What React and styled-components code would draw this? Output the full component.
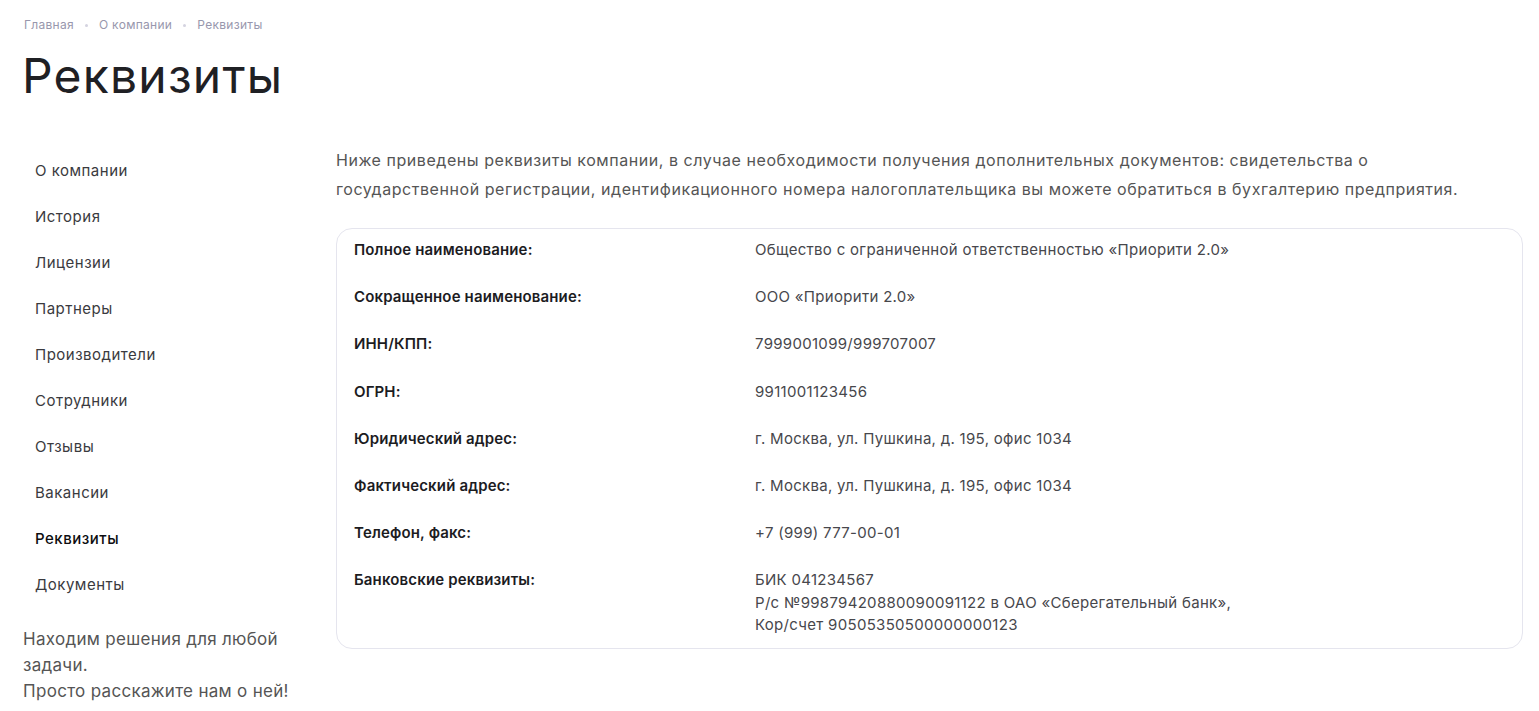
import React from 'react';
import styled, { createGlobalStyle } from 'styled-components';

const Global = createGlobalStyle`
  body {
    margin: 0;
    background: #fff;
    font-family: Inter, 'Noto Sans', sans-serif;
    color: #222;
  }
`;

const Page = styled.div`
  padding: 16px 16px 20px 24px;
`;

const Crumbs = styled.nav`
  display: flex;
  align-items: center;
  gap: 11px;
  font-size: 12px;
  letter-spacing: 0.3px;
  line-height: 18px;
  color: #9897ad;
`;

const Dot = styled.span`
  width: 3px;
  height: 3px;
  border-radius: 50%;
  background: #d4d3e0;
`;

const Title = styled.h1`
  margin: 12px 0 0 -2px;
  font-size: 48px;
  font-weight: 400;
  line-height: 60px;
  color: #1f2024;
  letter-spacing: 1.2px;
`;

const Layout = styled.div`
  display: grid;
  grid-template-columns: 290px 1fr;
  column-gap: 22px;
  margin-top: 40px;
`;

const Side = styled.aside`
  padding-top: 2px;
`;

const Menu = styled.ul`
  list-style: none;
  margin: 0;
  padding: 0;
`;

const MenuItem = styled.li`
  padding: 12px 11px;
  font-size: 15px;
  letter-spacing: 0.5px;
  line-height: 22px;
  color: ${p => (p.$active ? '#0d0d10' : '#3a3a3e')};
  font-weight: ${p => (p.$active ? 500 : 400)};
`;

const Tagline = styled.p`
  margin: 18px 0 0 -1px;
  font-size: 17px;
  letter-spacing: 0.3px;
  line-height: 26px;
  color: #555;
`;

const Intro = styled.p`
  margin: 0 0 24px;
  max-width: 1170px;
  font-size: 16px;
  letter-spacing: 0.55px;
  line-height: 29px;
  color: #555;
`;

const Card = styled.div`
  border: 1px solid #e5e5ee;
  border-radius: 16px;
  padding: 10px 17px 11px;
  display: grid;
  grid-template-columns: 401px 1fr;
  row-gap: 24.7px;
`;

const Label = styled.div`
  font-size: 15px;
  letter-spacing: 0.15px;
  line-height: 22px;
  font-weight: 600;
  color: #1c1c1f;
`;

const Value = styled.div`
  font-size: 15px;
  letter-spacing: 0.3px;
  line-height: 22.5px;
  color: #47474c;
`;

const rows = [
  ['Полное наименование:', ['Общество с ограниченной ответственностью «Приорити 2.0»']],
  ['Сокращенное наименование:', ['ООО «Приорити 2.0»']],
  ['ИНН/КПП:', ['7999001099/999707007']],
  ['ОГРН:', ['9911001123456']],
  ['Юридический адрес:', ['г. Москва, ул. Пушкина, д. 195, офис 1034']],
  ['Фактический адрес:', ['г. Москва, ул. Пушкина, д. 195, офис 1034']],
  ['Телефон, факс:', ['+7 (999) 777-00-01']],
  ['Банковские реквизиты:', [
    'БИК 041234567',
    'Р/с №99879420880090091122 в ОАО «Сберегательный банк»,',
    'Кор/счет 90505350500000000123',
  ]],
];

const menu = ['О компании', 'История', 'Лицензии', 'Партнеры', 'Производители', 'Сотрудники', 'Отзывы', 'Вакансии', 'Реквизиты', 'Документы'];

export default function App() {
  return (
    <Page>
      <Global />
      <Crumbs>
        <span>Главная</span>
        <Dot />
        <span>О компании</span>
        <Dot />
        <span>Реквизиты</span>
      </Crumbs>
      <Title>Реквизиты</Title>
      <Layout>
        <Side>
          <Menu>
            {menu.map(m => (
              <MenuItem key={m} $active={m === 'Реквизиты'}>{m}</MenuItem>
            ))}
          </Menu>
          <Tagline>
            Находим решения для любой задачи.<br />
            Просто расскажите нам о ней!
          </Tagline>
        </Side>
        <main>
          <Intro>
            Ниже приведены реквизиты компании, в случае необходимости получения дополнительных документов: свидетельства о государственной регистрации, идентификационного номера налогоплательщика вы можете обратиться в бухгалтерию предприятия.
          </Intro>
          <Card>
            {rows.map(([label, lines]) => (
              <React.Fragment key={label}>
                <Label>{label}</Label>
                <Value>
                  {lines.map(l => (
                    <div key={l}>{l}</div>
                  ))}
                </Value>
              </React.Fragment>
            ))}
          </Card>
        </main>
      </Layout>
    </Page>
  );
}
